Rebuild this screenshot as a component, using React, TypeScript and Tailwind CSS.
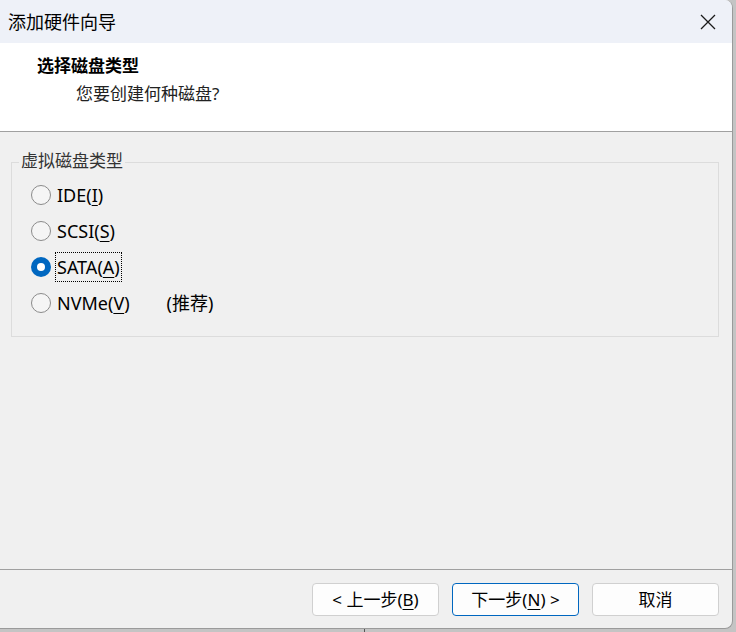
import React from "react";

const F = { fontFamily: '"Noto Sans", "Noto Sans CJK SC", sans-serif' };

function Radio({ checked }: { checked?: boolean }) {
  if (checked) {
    return (
      <span className="w-[20px] h-[20px] rounded-full bg-[#0067c0] flex items-center justify-center shrink-0">
        <span className="w-[8px] h-[8px] rounded-full bg-white" />
      </span>
    );
  }
  return <span className="w-[20px] h-[20px] rounded-full border border-[#8b8b8b] bg-[#f5f5f5] shrink-0 box-border" />;
}

function Option({ label, k, rest, checked, extra }: { label: string; k: string; rest: string; checked?: boolean; extra?: string }) {
  return (
    <div className="h-[36px] flex items-center">
      <Radio checked={checked} />
      <span
        className={
          "ml-[5px] text-[18px] leading-[28px] text-black px-[1px] " +
          (checked ? "outline outline-1 outline-dotted outline-black" : "")
        }
      >
        {label}(<span className="underline underline-offset-[3px]">{k}</span>){rest}
      </span>
      {extra && <span className="ml-[36px] text-[18px] text-black">{extra}</span>}
    </div>
  );
}

export default function App() {
  return (
    <div className="w-[736px] h-[632px] bg-[#c4c4c4] relative overflow-hidden" style={F}>
      <div className="w-[733px] h-[629px] bg-[#f0f0f0] rounded-tr-[8px] rounded-br-[8px] border-r border-b border-[#9a9a9a] flex flex-col overflow-hidden">
        {/* title bar */}
        <div className="h-[43px] bg-[#eef1f8] flex items-center justify-between pl-[8px] pr-[16px] shrink-0">
          <span className="text-[18px] text-black leading-none">添加硬件向导</span>
          <svg width="16" height="16" viewBox="0 0 16 16" className="mt-[1px]">
            <path d="M1 1 L15 15 M15 1 L1 15" stroke="#1a1a1a" strokeWidth="1.3" fill="none" />
          </svg>
        </div>
        {/* header */}
        <div className="h-[89px] bg-white border-b border-[#a0a0a0] shrink-0 pt-[11px]">
          <div className="pl-[37px] text-[17px] font-bold text-black leading-[24px]">选择磁盘类型</div>
          <div className="pl-[76px] mt-[4px] text-[17px] text-[#222] leading-[24px]">您要创建何种磁盘?</div>
        </div>
        {/* body */}
        <div className="flex-1 px-[11px] pt-[30px] relative">
          <div className="relative border border-[#dcdcdc] h-[175px] w-[708px] pl-[19px] pt-[14px]">
            <span className="absolute left-[7px] top-[-14px] px-[2px] bg-[#f0f0f0] text-[17px] text-[#333] leading-[24px]">
              虚拟磁盘类型
            </span>
            <Option label="IDE" k="I" rest="" />
            <Option label="SCSI" k="S" rest="" />
            <Option label="SATA" k="A" rest="" checked />
            <Option label="NVMe" k="V" rest="" extra="(推荐)" />
          </div>
        </div>
        {/* footer */}
        <div className="h-[59px] border-t border-[#a0a0a0] shrink-0 flex items-start justify-end gap-[13px] pr-[13px] pt-[13px]">
          <button className="w-[127px] h-[33px] bg-[#fdfdfd] border border-[#d0d0d0] rounded-[4px] text-[17px] text-black flex items-center justify-center">
            &lt; 上一步(<span className="underline underline-offset-[3px]">B</span>)
          </button>
          <button className="w-[127px] h-[33px] bg-[#fdfdfd] border border-[#0067c0] rounded-[4px] text-[17px] text-black flex items-center justify-center">
            下一步(<span className="underline underline-offset-[3px]">N</span>) &gt;
          </button>
          <button className="w-[127px] h-[33px] bg-[#fdfdfd] border border-[#d0d0d0] rounded-[4px] text-[17px] text-black flex items-center justify-center">
            取消
          </button>
        </div>
      </div>
      <div className="absolute left-[364px] top-[629px] w-[1px] h-[3px] bg-[#555]" />
    </div>
  );
}
